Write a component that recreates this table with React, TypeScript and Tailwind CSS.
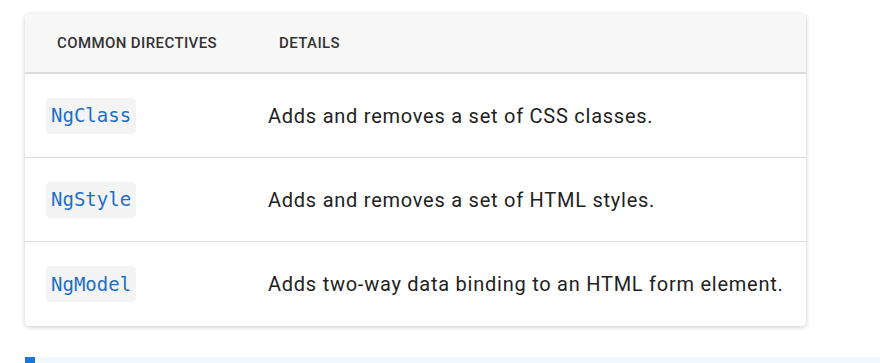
const rows = [
  { name: "NgClass", details: "Adds and removes a set of CSS classes." },
  { name: "NgStyle", details: "Adds and removes a set of HTML styles." },
  { name: "NgModel", details: "Adds two-way data binding to an HTML form element." },
];

export default function App() {
  return (
    <div className="min-h-screen bg-white pt-[14px] pl-[25px] font-['Roboto',sans-serif]">
      <div className="w-[781px] rounded-[4px] bg-white shadow-[0_1px_4px_rgba(0,0,0,0.22)] overflow-hidden">
        <div className="flex h-[60px] items-center border-b-2 border-[#dbdbdb] bg-[#f7f7f7] text-[15px] font-medium uppercase tracking-[0.4px] text-[#333]">
          <div className="w-[222px] pl-[32px]">Common Directives</div>
          <div className="pl-[32px]">Details</div>
        </div>
        {rows.map((row, i) => (
          <div
            key={row.name}
            className={`flex h-[84px] items-center ${i < rows.length - 1 ? "border-b border-[#dbdbdb]" : ""}`}
          >
            <div className="w-[222px] pl-[21px]">
              <code className="inline-flex h-[36px] items-center rounded-[4px] bg-[#f4f4f4] px-[5px] font-['DejaVu_Sans_Mono',monospace] text-[19px] text-[#1e6fc8]">
                {row.name}
              </code>
            </div>
            <div className="pl-[21px] text-[20px] tracking-[0.75px] text-[#222]">{row.details}</div>
          </div>
        ))}
      </div>
      <div className="mt-[31px] h-[20px] border-l-[10px] border-[#1976d2] bg-[#f1f7fd]" />
    </div>
  );
}
